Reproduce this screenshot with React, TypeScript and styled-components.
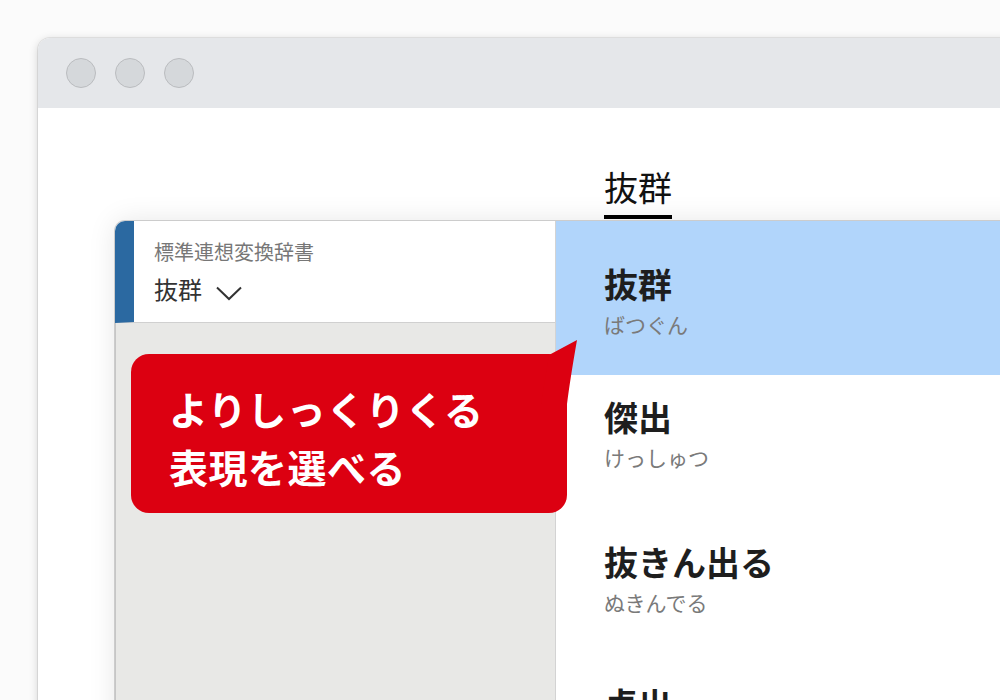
import styled, { createGlobalStyle } from "styled-components"

const GlobalStyle = createGlobalStyle`
  html, body {
    margin: 0;
    padding: 0;
    background: #fbfbfb;
  }
  * {
    box-sizing: border-box;
  }
`

const SANS = `"Noto Sans CJK JP", "Noto Sans", sans-serif`
const SERIF = `"Liberation Serif", "Noto Sans CJK JP", serif`

type Candidate = {
  word: string
  reading: string
  height: number
  top: number
}

const candidates: Candidate[] = [
  { word: "抜群", reading: "ばつぐん", height: 154, top: 46 },
  { word: "傑出", reading: "けっしゅつ", height: 145, top: 25 },
  { word: "抜きん出る", reading: "ぬきんでる", height: 142, top: 25 },
  { word: "卓出", reading: "たくしゅつ", height: 142, top: 25 },
]

const Style = {
  Page: styled.div`
    width: 1000px;
    height: 700px;
    overflow: hidden;
    padding: 38px 0 0 38px;
    font-family: ${SANS};
  `,
  Window: styled.div`
    width: 1000px;
    height: 700px;
    background: #ffffff;
    border-radius: 12px 0 0 0;
    box-shadow: 0 0 0 1px rgba(0, 0, 0, 0.07), 0 2px 10px rgba(0, 0, 0, 0.18);
    display: flex;
    flex-direction: column;
    overflow: hidden;
  `,
  TitleBar: styled.div`
    height: 70px;
    background: #e5e7ea;
    display: flex;
    align-items: center;
    gap: 19px;
    padding-left: 28px;
    flex-shrink: 0;
  `,
  Light: styled.div`
    width: 30px;
    height: 30px;
    border-radius: 50%;
    background: #d5d8db;
    border: 1px solid #babcbf;
  `,
  TabRow: styled.div`
    height: 113px;
    padding: 59px 0 0 566px;
    flex-shrink: 0;
  `,
  Tab: styled.span`
    display: inline-block;
    font-size: 34px;
    line-height: 40px;
    color: #111;
    padding-bottom: 8px;
    border-bottom: 4px solid #000;
  `,
  Panel: styled.div`
    margin-left: 77px;
    height: 520px;
    display: flex;
    border-radius: 10px 0 0 0;
    box-shadow: 0 0 0 1px rgba(0, 0, 0, 0.16), 0 0 28px rgba(0, 0, 0, 0.1);
    position: relative;
    overflow: visible;
  `,
  Side: styled.div`
    width: 441px;
    display: flex;
    flex-direction: column;
    border-radius: 10px 0 0 0;
    overflow: hidden;
    border-right: 1px solid #d3d3d3;
    background: #e8e8e6;
  `,
  SideHeader: styled.div`
    height: 102px;
    background: #ffffff;
    border-left: 19px solid #2b69a1;
    border-bottom: 1px solid #d0d0d0;
    padding: 19px 0 0 20px;
  `,
  DictName: styled.div`
    font-size: 20px;
    line-height: 24px;
    color: #777;
  `,
  Current: styled.div`
    margin-top: 9px;
    display: flex;
    align-items: center;
    gap: 14px;
    font-size: 24px;
    line-height: 32px;
    color: #333;
  `,
  SideBody: styled.div`
    flex: 1;
    border-left: 1px solid #c6c6c6;
  `,
  List: styled.div`
    flex: 1;
    background: #ffffff;
    display: flex;
    flex-direction: column;
  `,
  Item: styled.div<{ $selected: boolean; $height: number; $top: number }>`
    height: ${(p) => p.$height}px;
    flex-shrink: 0;
    padding: ${(p) => p.$top}px 0 0 48px;
    background: ${(p) => (p.$selected ? "#b1d5fb" : "#ffffff")};
  `,
  Word: styled.div`
    font-family: ${SERIF};
    font-weight: 700;
    font-size: 34px;
    line-height: 40px;
    color: #1e1e1e;
  `,
  Reading: styled.div`
    margin-top: 4px;
    font-size: 21px;
    line-height: 26px;
    color: #7a7a7a;
  `,
  Bubble: styled.div`
    position: absolute;
    left: 16px;
    top: 133px;
    width: 436px;
    height: 159px;
    background: #dc0011;
    border-radius: 18px;
    padding: 25px 0 0 38px;
    color: #ffffff;
    font-weight: 700;
    font-size: 39px;
    line-height: 58px;
    letter-spacing: 0.5px;
  `,
  Tail: styled.svg`
    position: absolute;
    left: 0;
    top: -14px;
    overflow: visible;
  `,
}

function Chevron() {
  return (
    <svg width="26" height="15" viewBox="0 0 26 15" style={{ marginTop: 8 }}>
      <polyline
        points="1,1.5 13,13 25,1.5"
        fill="none"
        stroke="#333"
        strokeWidth="2"
      />
    </svg>
  )
}

export default function App() {
  return (
    <>
      <GlobalStyle />
      <Style.Page>
        <Style.Window>
          <Style.TitleBar>
            <Style.Light />
            <Style.Light />
            <Style.Light />
          </Style.TitleBar>
          <Style.TabRow>
            <Style.Tab>抜群</Style.Tab>
          </Style.TabRow>
          <Style.Panel>
            <Style.Side>
              <Style.SideHeader>
                <Style.DictName>標準連想変換辞書</Style.DictName>
                <Style.Current>
                  抜群
                  <Chevron />
                </Style.Current>
              </Style.SideHeader>
              <Style.SideBody />
            </Style.Side>
            <Style.List>
              {candidates.map((c, i) => (
                <Style.Item
                  key={c.word}
                  $selected={i === 0}
                  $height={c.height}
                  $top={c.top}
                >
                  <Style.Word>{c.word}</Style.Word>
                  <Style.Reading>{c.reading}</Style.Reading>
                </Style.Item>
              ))}
            </Style.List>
            <Style.Bubble>
              <Style.Tail width="450" height="70" viewBox="0 0 450 70">
                <path d="M418 15 L446 0 Q439 40 436 64 L410 64 Z" fill="#dc0011" />
              </Style.Tail>
              よりしっくりくる
              <br />
              表現を選べる
            </Style.Bubble>
          </Style.Panel>
        </Style.Window>
      </Style.Page>
    </>
  )
}
